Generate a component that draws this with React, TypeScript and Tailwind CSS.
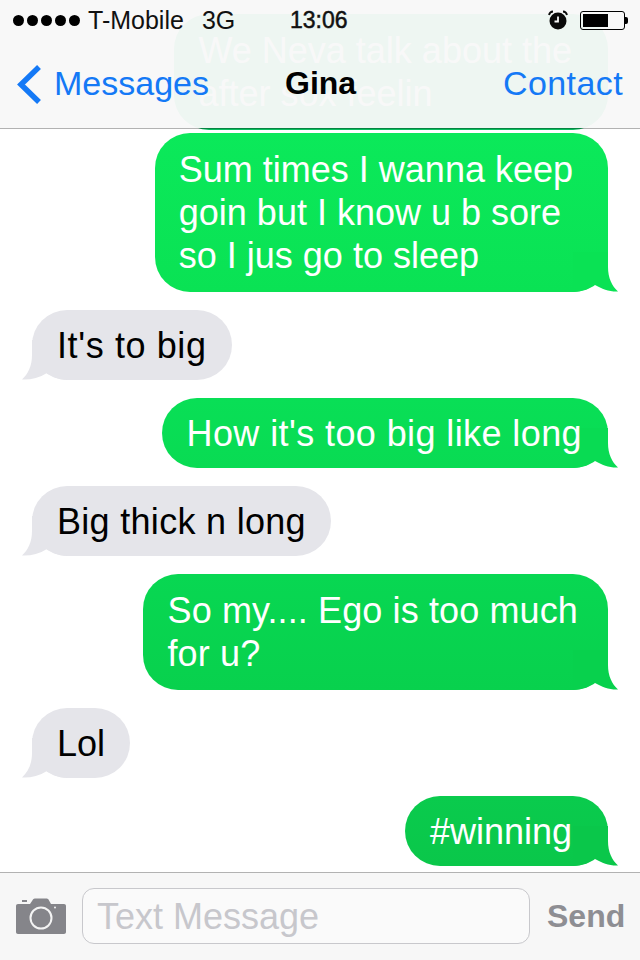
import React from "react";

const FONT = "font-['Liberation_Sans',Arial,sans-serif]";

function OutTail({ color }: { color: string }) {
  return (
    <svg className="absolute right-[-10px] bottom-0" width="45" height="40" viewBox="0 0 45 40">
      <path d="M0 0 H35 V15 C35 26 39 34 45 39.500 C37 40 29 37 22 33 C18 36 10 40 0 40 Z" fill={color} />
    </svg>
  );
}

function InTail() {
  return (
    <svg className="absolute left-[-10px] bottom-0" width="45" height="40" viewBox="0 0 45 40">
      <path d="M45 0 H10 V15 C10 26 6 34 0 39.500 C8 40 17 38 25 33 C29 36 37 40 45 40 Z" fill="#e5e5ea" />
    </svg>
  );
}

type OutgoingProps = {
  lines: string[];
  gradient: string;
  tail?: string;
  pad: string;
  text?: string;
};

function Outgoing({ lines, gradient, tail, pad, text = "text-white" }: OutgoingProps) {
  return (
    <div className="flex justify-end pr-[32px]">
      <div className={`relative rounded-[35px] ${text} ${pad} ${gradient}`}>
        {tail && <OutTail color={tail} />}
        {lines.map((line) => (
          <div key={line} className="relative whitespace-nowrap">{line}</div>
        ))}
      </div>
    </div>
  );
}

function Incoming({ text, tracking = "" }: { text: string; tracking?: string }) {
  return (
    <div className="flex justify-start pl-[32px]">
      <div className={`relative h-[70px] rounded-[35px] bg-[#e5e5ea] px-[25px] py-[14px] text-black whitespace-nowrap ${tracking}`}>
        <InTail />
        <span className="relative">{text}</span>
      </div>
    </div>
  );
}

function Alarm() {
  return (
    <svg width="22" height="22" viewBox="0 0 22 22">
      <circle cx="11" cy="12" r="8.500" fill="#0a0a0a" />
      <path d="M11 7.500 V12.500 H7.500" fill="none" stroke="#f8f8f8" strokeWidth="1.800" />
      <path d="M2 6 C2.500 3.800 4 2.600 6 2.500 M20 6 C19.500 3.800 18 2.600 16 2.500" fill="none" stroke="#0a0a0a" strokeWidth="1.800" />
    </svg>
  );
}

function Camera() {
  return (
    <svg width="50" height="38" viewBox="0 0 50 38">
      <path
        d="M2 7 H14 L17 2.500 C17.500 1.700 18.500 1.500 19.500 1.500 H30 C31 1.500 32 1.700 32.500 2.500 L35 7 H48 C49.200 7 50 7.800 50 9 V35 C50 36.200 49.200 37 48 37 H2 C0.800 37 0 36.200 0 35 V9 C0 7.800 0.800 7 2 7 Z"
        fill="#85858a"
      />
      <rect x="6" y="3" width="5" height="2" fill="#85858a" />
      <circle cx="25" cy="21" r="10.500" fill="none" stroke="#f4f4f4" strokeWidth="2" />
      <circle cx="39" cy="10.500" r="1" fill="#f4f4f4" />
    </svg>
  );
}

export default function App() {
  return (
    <div className={`relative flex h-[960px] w-[640px] flex-col overflow-hidden bg-white text-[36px] leading-[43px] ${FONT}`}>
      {/* translucent navigation bar floats above the scrolled conversation */}
      <header className="absolute inset-x-0 top-0 z-10 h-[129px] border-b border-black/30 bg-[#f8f8f8]/[0.96] bg-clip-padding">
        <div className="relative flex h-[40px] items-center pl-[13px] text-[25px] leading-none text-[#111]">
          <div className="flex gap-[3px]">
            {[0, 1, 2, 3, 4].map((i) => (
              <span key={i} className="h-[11px] w-[11px] rounded-full bg-black" />
            ))}
          </div>
          <span className="ml-[8px]">T-Mobile</span>
          <span className="ml-[18px]">3G</span>
          <span className="absolute left-[290px] text-[23px] [-webkit-text-stroke:0.5px_#111]">13:06</span>
          <div className="absolute left-[547px] top-[9px]"><Alarm /></div>
          <div className="absolute left-[580px] top-[11px] flex items-center">
            <div className="h-[19px] w-[45px] rounded-[3px] border border-black p-[2px]">
              <div className="h-full w-[25px] bg-black" />
            </div>
            <div className="h-[7px] w-[3px] rounded-r-[2px] bg-black" />
          </div>
        </div>
        <nav className="relative flex h-[88px] items-start pt-[22px] text-[34px] text-[#1479f6]">
          <svg className="ml-[17px] mt-[3px]" width="25" height="40" viewBox="0 0 25 40">
            <path d="M22 2 L4 19.500 L22 37" fill="none" stroke="#1479f6" strokeWidth="5.500" />
          </svg>
          <span className="ml-[12px]">Messages</span>
          <span className="absolute left-[285px] text-[32px] font-bold text-black">Gina</span>
          <span className="ml-auto mr-[17px] tracking-[0.4px]">Contact</span>
        </nav>
      </header>

      <main className="flex flex-1 flex-col pt-[14px]">
        <Outgoing
          lines={["We Neva talk about the", "after sox feelin"]}
          gradient="bg-[#08bd5e]"
          pad="pl-[24px] pr-[36px] py-[15px] h-[116px]"
        />
        <div className="mt-[3px]">
          <Outgoing
            lines={["Sum times I wanna keep", "goin but I know u b sore", "so I jus go to sleep"]}
            gradient="bg-gradient-to-b from-[#0be95a] to-[#0ae254]"
            tail="#0ae254"
            pad="pl-[24px] pr-[35px] py-[15px] h-[159px]"
          />
        </div>
        <div className="mt-[18px]"><Incoming text="It's to big" tracking="tracking-[0.6px]" /></div>
        <div className="mt-[18px]">
          <Outgoing
            lines={["How it's too big like long"]}
            gradient="bg-gradient-to-b from-[#09df56] to-[#09db53]"
            tail="#09db53"
            text="text-white tracking-[0.4px]"
            pad="pl-[25px] pr-[26px] py-[14px] h-[70px]"
          />
        </div>
        <div className="mt-[18px]"><Incoming text="Big thick n long" tracking="tracking-[0.3px]" /></div>
        <div className="mt-[18px]">
          <Outgoing
            lines={["So my.... Ego is too much", "for u?"]}
            gradient="bg-gradient-to-b from-[#08d752] to-[#08d14d]"
            tail="#08d14d"
            text="text-white tracking-[0.12px]"
            pad="pl-[25px] pr-[30px] py-[15px] h-[116px]"
          />
        </div>
        <div className="mt-[18px]"><Incoming text="Lol" /></div>
        <div className="mt-[18px]">
          <Outgoing
            lines={["#winning"]}
            gradient="bg-gradient-to-b from-[#0acb4d] to-[#0ac74a]"
            tail="#0ac74a"
            pad="pl-[25px] pr-[36px] py-[14px] h-[70px]"
          />
        </div>
      </main>

      <footer className="flex h-[88px] shrink-0 items-center border-t border-[#b2b2b2] bg-[#f7f7f7] pb-[1px] pl-[16px]">
        <Camera />
        <div className="ml-[16px] flex h-[56px] w-[448px] items-center rounded-[12px] border border-[#c8c8cc] bg-[#fafafa] pl-[14px] text-[#c7c7cc]">
          Text Message
        </div>
        <span className="ml-[17px] text-[32px] font-bold text-[#8e8e93]">Send</span>
      </footer>
    </div>
  );
}
